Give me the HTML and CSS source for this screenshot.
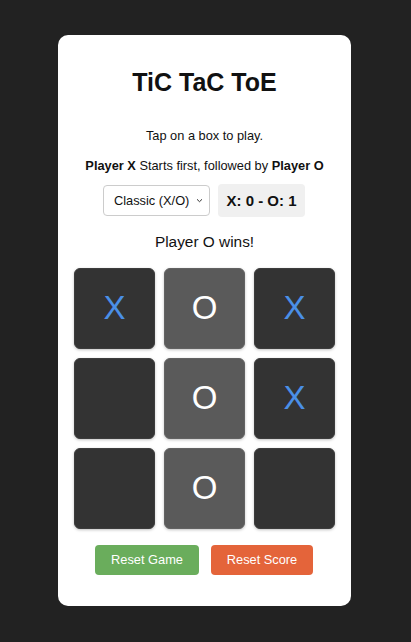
FILE: index.html
```html
<!DOCTYPE html>
<html lang="en">
<head>
<meta charset="utf-8">
<title>TiC TaC ToE</title>
<link rel="stylesheet" href="styles.css">
</head>
<body>
<main class="card">
  <h1 class="title">TiC TaC ToE</h1>
  <p class="hint">Tap on a box to play.</p>
  <p class="rule"><b>Player X</b> Starts first, followed by <b>Player O</b></p>
  <div class="controls">
    <div class="select-wrap">
      <select class="mode">
        <option>Classic (X/O)</option>
      </select>
      <svg class="chev" width="7" height="5" viewBox="0 0 7 5" aria-hidden="true"><path d="M1 1.3 L3.5 3.7 L6 1.3" fill="none" stroke="#333" stroke-width="1"/></svg>
    </div>
    <div class="score">X: 0 - O: 1</div>
  </div>
  <p class="status">Player O wins!</p>
  <div class="board">
    <div class="cell x">X</div>
    <div class="cell o win">O</div>
    <div class="cell x">X</div>
    <div class="cell"></div>
    <div class="cell o win">O</div>
    <div class="cell x">X</div>
    <div class="cell"></div>
    <div class="cell o win">O</div>
    <div class="cell"></div>
  </div>
  <div class="actions">
    <button class="btn reset-game">Reset Game</button>
    <button class="btn reset-score">Reset Score</button>
  </div>
</main>
</body>
</html>
```
FILE: styles.css
```css
* { box-sizing: border-box; }
html, body { margin: 0; padding: 0; }
body {
  background: #222222;
  font-family: "Liberation Sans", Arial, sans-serif;
  color: #111;
  padding-top: 35px;
}
.card {
  width: 293px;
  margin: 0 0 0 58px;
  background: #ffffff;
  border-radius: 10px;
  padding: 33px 16px 31px;
  display: flex;
  flex-direction: column;
  align-items: center;
}
.title {
  margin: 0;
  font-size: 25px;
  line-height: 29px;
  font-weight: bold;
}
.hint {
  margin: 30.5px 0 0;
  font-size: 12.8px;
  line-height: 15px;
}
.rule {
  margin: 15px 0 0;
  font-size: 12.8px;
  line-height: 15px;
}
.controls {
  margin-top: 11.5px;
  display: flex;
  align-items: center;
  gap: 8px;
  margin-left: -1px;
}
.select-wrap {
  position: relative;
  width: 107px;
  height: 31px;
}
.mode {
  -webkit-appearance: none;
  appearance: none;
  width: 107px;
  height: 31px;
  font-family: "Liberation Sans", Arial, sans-serif;
  font-size: 12.8px;
  color: #111;
  background: #fff;
  border: 1px solid #ccc;
  border-radius: 4px;
  padding: 0 18px 0 10px;
  outline: none;
}
.chev {
  position: absolute;
  right: 7px;
  top: 13px;
  pointer-events: none;
}
.score {
  background: #f0f0f0;
  border-radius: 4px;
  font-size: 15px;
  font-weight: bold;
  line-height: 17px;
  padding: 8px 0;
  width: 87px;
  text-align: center;
}
.status {
  margin: 15.7px 0 0;
  font-size: 15.4px;
  line-height: 18px;
}
.board {
  margin-top: 17.3px;
  display: grid;
  grid-template-columns: repeat(3, 81px);
  grid-auto-rows: 81px;
  gap: 9px;
}
.cell {
  background: #333333;
  border: 1px solid #3c3c3c;
  border-radius: 6px;
  box-shadow: 0 1px 3px rgba(0, 0, 0, 0.25);
  display: flex;
  align-items: center;
  justify-content: center;
  font-size: 33px;
  font-family: "Liberation Sans", Arial, sans-serif;
}
.cell.win { background: #5a5a5a; border-color: #626262; }
.cell.x { color: #4a8fe7; }
.cell.o { color: #ffffff; }
.actions {
  margin-top: 16px;
  display: flex;
  gap: 12px;
  margin-left: -1px;
}
.btn {
  border: none;
  border-radius: 4px;
  color: #fff;
  font-family: "Liberation Sans", Arial, sans-serif;
  font-size: 12.8px;
  line-height: 15px;
  padding: 0;
  height: 30px;
  white-space: nowrap;
  text-align: center;
}
.reset-game { background: #6aad5c; width: 104px; }
.reset-score { background: #e4643a; width: 102px; }
```
